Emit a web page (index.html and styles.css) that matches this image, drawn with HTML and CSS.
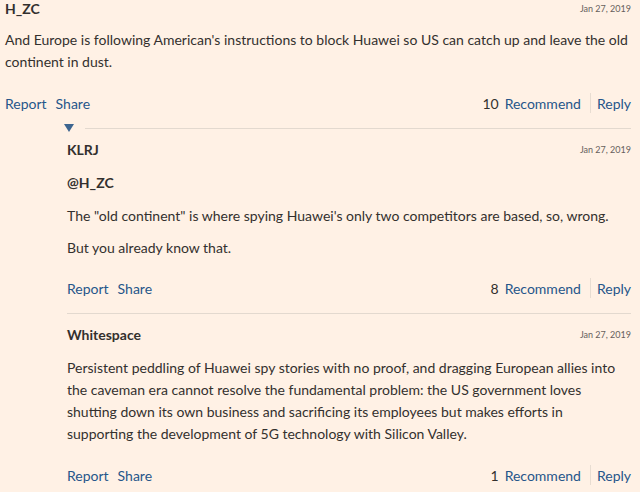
FILE: index.html
```html
<!DOCTYPE html>
<html>
<head>
<meta charset="utf-8">
<link rel="stylesheet" href="styles.css">
</head>
<body>
<div class="thread">
  <div class="comment">
    <div class="head"><span class="name">H_ZC</span><span class="date">Jan 27, 2019</span></div>
    <div class="body"><p>And Europe is following American's instructions to block Huawei so US can catch up and leave the old continent in dust.</p></div>
    <div class="actions">
      <div class="left"><a>Report</a><a>Share</a></div>
      <div class="right"><span class="count">10</span><a>Recommend</a><span class="sep"></span><a>Reply</a></div>
    </div>
  </div>
  <div class="replies">
    <div class="toggle"><span class="tri"></span><span class="rule"></span></div>
    <div class="comment reply">
      <div class="head"><span class="name">KLRJ</span><span class="date">Jan 27, 2019</span></div>
      <div class="body">
        <p class="mention">@H_ZC</p>
        <p>The "old continent" is where spying Huawei's only two competitors are based, so, wrong.</p>
        <p>But you already know that.</p>
      </div>
      <div class="actions">
        <div class="left"><a>Report</a><a>Share</a></div>
        <div class="right"><span class="count">8</span><a>Recommend</a><span class="sep"></span><a>Reply</a></div>
      </div>
    </div>
    <div class="comment reply divided">
      <div class="head"><span class="name">Whitespace</span><span class="date">Jan 27, 2019</span></div>
      <div class="body">
        <p>Persistent peddling of Huawei spy stories with no proof, and dragging European allies into the caveman era cannot resolve the fundamental problem: the US government loves shutting down its own business and sacrificing its employees but makes efforts in supporting the development of 5G technology with Silicon Valley.</p>
      </div>
      <div class="actions">
        <div class="left"><a>Report</a><a>Share</a></div>
        <div class="right"><span class="count">1</span><a>Recommend</a><span class="sep"></span><a>Reply</a></div>
      </div>
    </div>
  </div>
</div>
</body>
</html>
```
FILE: styles.css
```css
html, body {
  margin: 0;
  padding: 0;
  background: #fff1e5;
}
body {
  font-family: "Lato", "Open Sans", sans-serif;
  color: #33302e;
  font-size: 14px;
  width: 640px;
  height: 492px;
  overflow: hidden;
}
.thread {
  padding: 0 9px 0 5px;
}
.head {
  display: flex;
  justify-content: space-between;
  align-items: center;
  height: 16px;
}
.name {
  font-weight: 700;
  font-size: 14px;
}
.date {
  font-size: 9px;
  color: #66605c;
}
.body p {
  margin: 0;
  line-height: 22px;
}
.comment > .body {
  margin-top: 13px;
}
.body p + p {
  margin-top: 10px;
}
.body .mention {
  font-weight: 700;
  padding-bottom: 1px;
}
.reply > .body {
  margin-top: 15px;
}
.actions {
  display: flex;
  justify-content: space-between;
  align-items: center;
  height: 20px;
  margin-top: 20px;
}
.actions a {
  color: #26568a;
  cursor: pointer;
}
.left a + a {
  margin-left: 9px;
}
.right {
  display: flex;
  align-items: center;
}
.count {
  margin-right: 6px;
}
.sep {
  width: 1px;
  height: 20px;
  background: #e8ddd2;
  margin: 0 6px 0 9px;
}
.replies {
  margin-left: 59px;
}
.toggle {
  display: flex;
  align-items: center;
  height: 12px;
  margin-top: 9px;
}
.tri {
  width: 0;
  height: 0;
  border-left: 5.5px solid transparent;
  border-right: 5.5px solid transparent;
  border-top: 8px solid #3d6590;
}
.rule {
  flex: 1;
  height: 1px;
  background: #e3d9cf;
  margin-left: 11px;
}
.reply {
  margin-left: 3px;
}
.reply .head {
  margin-top: 7px;
}
.reply > .actions {
  margin-top: 19px;
}
.divided {
  border-top: 1px solid #e3d9cf;
  margin-top: 15px;
  padding-top: 5px;
}
.divided > .body {
  margin-top: 15px;
}
.divided > .actions {
  margin-top: 20px;
}
```
